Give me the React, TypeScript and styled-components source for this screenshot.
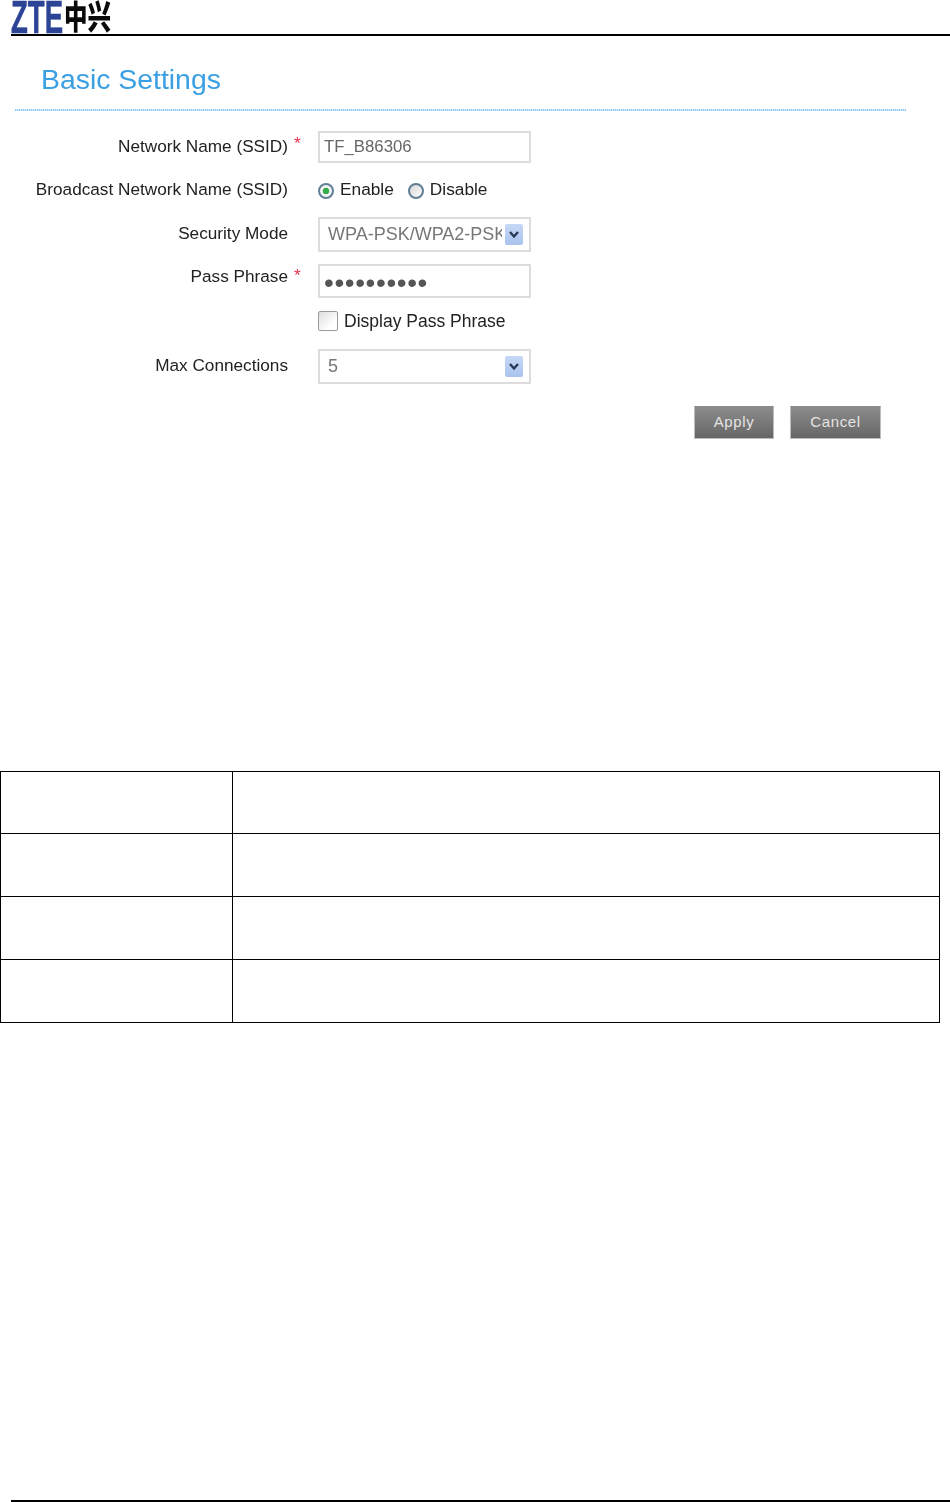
import React, { FC } from 'react'
import styled, { createGlobalStyle } from 'styled-components'

const GlobalStyle = createGlobalStyle`
  html, body {
    margin: 0;
    padding: 0;
    background: #fff;
  }
  body {
    font-family: 'Liberation Sans', Arial, sans-serif;
  }
`

const Page = styled.div`
  width: 950px;
  height: 1502px;
  display: flex;
  flex-direction: column;
  overflow: hidden;
  background: #fff;
`

const Header = styled.header`
  height: 34px;
  margin-left: 11px;
  border-bottom: 2px solid #000;
  display: flex;
`

const LogoImage = styled.svg`
  display: block;
  filter: blur(0.4px);
`

const Title = styled.h1`
  margin: 26px 0 0 41px;
  font-size: 28.4px;
  line-height: 34px;
  font-weight: 400;
  color: #3b9fe3;
  filter: blur(0.3px);
`

const Divider = styled.div`
  width: 891px;
  height: 2px;
  margin: 13px 0 0 15px;
  background: repeating-linear-gradient(90deg, #8ccbf4 0 1px, #d3eafb 1px 2px);
`

const Form = styled.form`
  display: flex;
  flex-direction: column;
  margin-top: 20px;
  color: #222;
  font-size: 17.3px;
  filter: blur(0.3px);
`

const Row = styled.div<{ $height: number; $gap: number }>`
  display: grid;
  grid-template-columns: 288px 30px 213px;
  grid-template-rows: ${(p) => p.$height}px;
  align-items: center;
  margin-bottom: ${(p) => p.$gap}px;
`

const Label = styled.label<{ $lift?: number }>`
  font-size: 17.2px;
  text-align: right;
  white-space: nowrap;
  margin-bottom: ${(p) => p.$lift ?? 2}px;
`

const Star = styled.span<{ $lift: number }>`
  color: #e4324a;
  padding-left: 6px;
  margin-bottom: ${(p) => p.$lift}px;
`

const TextBox = styled.input`
  box-sizing: border-box;
  width: 213px;
  height: 100%;
  padding: 0 0 0 4px;
  border: 2px solid #dcdcdc;
  outline: none;
  background: #fff;
  color: #666;
  font-family: inherit;
  font-size: 16.8px;
`

const PassBox = styled(TextBox)`
  padding-top: 3px;
  font-size: 28px;
  letter-spacing: 0.6px;
  color: #555;
`

const SelectBox = styled.div`
  box-sizing: border-box;
  width: 213px;
  height: 100%;
  border: 2px solid #dcdcdc;
  padding: 0 6px 0 8px;
  display: flex;
  align-items: center;
  color: #777;
  font-size: 18px;
`

const SelectValue = styled.span`
  flex: 1;
  min-width: 0;
  margin-right: 3px;
  overflow: hidden;
  white-space: nowrap;
`

const Arrow = styled.span`
  flex: none;
  width: 18px;
  height: 21px;
  border-radius: 2px;
  background: linear-gradient(#c7d8f6, #a9c3ee);
  display: flex;
  align-items: center;
  justify-content: center;
`

const Choices = styled.div`
  display: flex;
  align-items: center;
  white-space: nowrap;
`

const Radio = styled.span<{ $checked?: boolean }>`
  box-sizing: border-box;
  flex: none;
  width: 16px;
  height: 16px;
  border-radius: 50%;
  border: 2px solid #5f7f95;
  background: ${(p) =>
    p.$checked
      ? 'radial-gradient(circle, #2fae4a 0 3px, #f4f4f4 3.6px)'
      : 'linear-gradient(135deg, #d9d9d9, #fafafa)'};
  margin: 2px 6px 0 0;
`

const ChoiceText = styled.span`
  margin-right: 14px;
  margin-bottom: 2px;
`

const Checkbox = styled.span`
  box-sizing: border-box;
  flex: none;
  width: 20px;
  height: 20px;
  border: 1px solid #9a9a9a;
  border-radius: 2px;
  background: linear-gradient(135deg, #dedede, #fff 70%);
  margin-right: 6px;
`

const CheckText = styled.span`
  font-size: 17.5px;
`

const Actions = styled.div`
  display: flex;
  gap: 16px;
  margin: 22px 0 0 694px;
`

const Button = styled.button<{ $width: number }>`
  box-sizing: border-box;
  width: ${(p) => p.$width}px;
  height: 33px;
  padding: 0 0 2px;
  border: 1px solid #bdbdbd;
  border-top-color: #8a8a8a;
  background: linear-gradient(#8c8c8c, #666);
  color: #e4e4e4;
  font-family: inherit;
  font-size: 15px;
  letter-spacing: 0.6px;
`

const Table = styled.table`
  width: 940px;
  margin-top: 332px;
  border-collapse: collapse;
  table-layout: fixed;
`

const Cell = styled.td<{ $height: number }>`
  border: 1px solid #000;
  height: ${(p) => p.$height}px;
  padding: 0;
`

const Footer = styled.div`
  margin: auto 0 0 11px;
  border-bottom: 2px solid #000;
`

const ZteLogo: FC = () => (
  <LogoImage width="100" height="34" viewBox="0 0 100 34" aria-label="ZTE">
    <text
      x="0"
      y="33"
      fontFamily="'Liberation Sans', sans-serif"
      fontWeight="700"
      fontSize="46"
      fill="#2d4496"
      stroke="#2d4496"
      strokeWidth="0.6"
      textLength="52"
      lengthAdjust="spacingAndGlyphs"
    >
      ZTE
    </text>
    <text
      transform="translate(53 29) scale(1 1.4)"
      fontFamily="'Noto Sans CJK SC', sans-serif"
      fontWeight="900"
      fontSize="23.5"
      fill="#0a0a0a"
    >
      中兴
    </text>
  </LogoImage>
)

const ChevronIcon: FC = () => (
  <svg width="12" height="9" viewBox="0 0 12 9" aria-hidden="true">
    <path d="M2 2 L6 6.5 L10 2" fill="none" stroke="#2b3a55" strokeWidth="2.4" />
  </svg>
)

const tableRows = [
  { id: 'a', height: 61 },
  { id: 'b', height: 62 },
  { id: 'c', height: 62 },
  { id: 'd', height: 62 },
]

const App: FC = () => {
  return (
    <Page>
      <GlobalStyle />
      <Header>
        <ZteLogo />
      </Header>
      <Title>Basic Settings</Title>
      <Divider />
      <Form>
        <Row $height={32} $gap={12}>
          <Label $lift={1}>Network Name (SSID)</Label>
          <Star $lift={7}>*</Star>
          <TextBox readOnly value="TF_B86306" />
        </Row>
        <Row $height={30} $gap={12}>
          <Label $lift={1}>Broadcast Network Name (SSID)</Label>
          <span />
          <Choices>
            <Radio $checked />
            <ChoiceText>Enable</ChoiceText>
            <Radio />
            <ChoiceText>Disable</ChoiceText>
          </Choices>
        </Row>
        <Row $height={35} $gap={12}>
          <Label>Security Mode</Label>
          <span />
          <SelectBox>
            <SelectValue>WPA-PSK/WPA2-PSK</SelectValue>
            <Arrow><ChevronIcon /></Arrow>
          </SelectBox>
        </Row>
        <Row $height={34} $gap={12}>
          <Label $lift={10}>Pass Phrase</Label>
          <Star $lift={11}>*</Star>
          <PassBox readOnly type="password" value="1234567890" />
        </Row>
        <Row $height={22} $gap={17}>
          <span />
          <span />
          <Choices>
            <Checkbox />
            <CheckText>Display Pass Phrase</CheckText>
          </Choices>
        </Row>
        <Row $height={35} $gap={0}>
          <Label>Max Connections</Label>
          <span />
          <SelectBox>
            <SelectValue>5</SelectValue>
            <Arrow><ChevronIcon /></Arrow>
          </SelectBox>
        </Row>
        <Actions>
          <Button type="button" $width={80}>Apply</Button>
          <Button type="button" $width={91}>Cancel</Button>
        </Actions>
      </Form>
      <Table>
        <colgroup>
          <col style={{ width: 232 }} />
          <col />
        </colgroup>
        <tbody>
          {tableRows.map((row) => (
            <tr key={row.id}>
              <Cell $height={row.height} />
              <Cell $height={row.height} />
            </tr>
          ))}
        </tbody>
      </Table>
      <Footer />
    </Page>
  )
}

export default App
